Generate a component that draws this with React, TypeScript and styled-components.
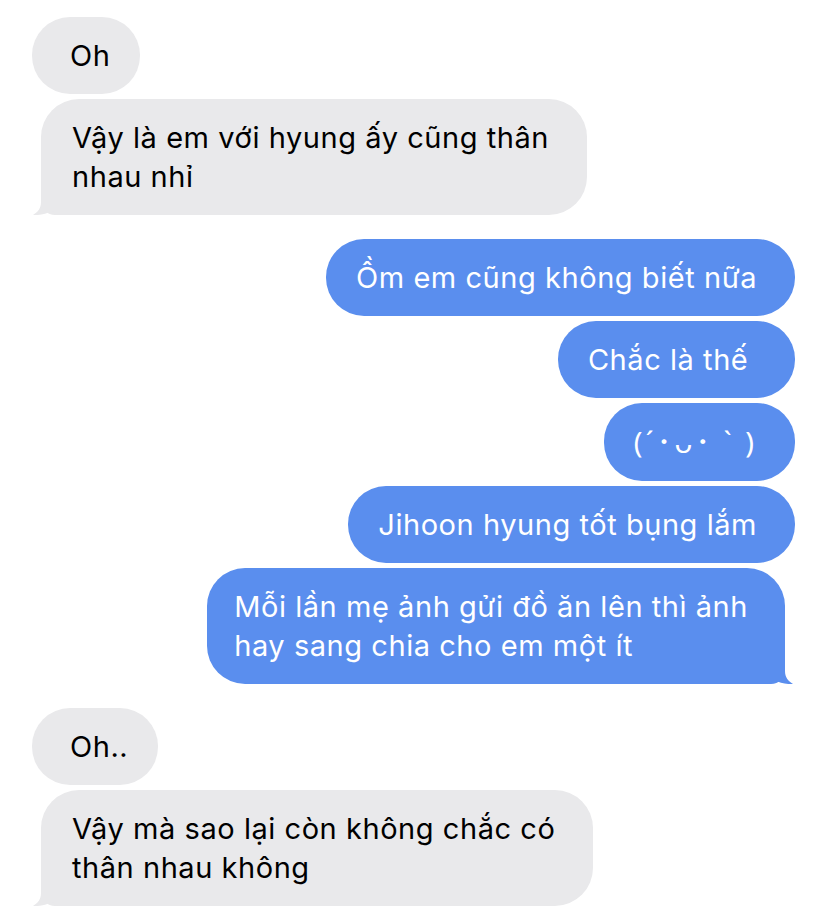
import { FC } from 'react';
import styled, { createGlobalStyle } from 'styled-components';

const GRAY = '#e9e9eb';
const BLUE = '#5a8eee';

const GlobalStyle = createGlobalStyle`
  html, body {
    margin: 0;
    padding: 0;
    background: #ffffff;
  }
  body {
    font-family: Inter, 'Noto Sans', 'Noto Sans CJK JP', sans-serif;
    -webkit-font-smoothing: antialiased;
  }
`;

const Thread = styled.div`
  width: 828px;
  height: 919px;
  box-sizing: border-box;
  padding-top: 17px;
  display: flex;
  flex-direction: column;
  gap: 5px;
  overflow: hidden;
`;

interface RowProps {
  $sent: boolean;
  $groupStart: boolean;
}

const Row = styled.div<RowProps>`
  display: flex;
  justify-content: ${(props) => (props.$sent ? 'flex-end' : 'flex-start')};
  padding: ${(props) => (props.$sent ? '0 33px 0 0' : '0 0 0 32px')};
  margin-top: ${(props) => (props.$groupStart ? 19 : 0)}px;
`;

interface BubbleProps {
  $sent: boolean;
  $tail: boolean;
}

const Bubble = styled.div<BubbleProps>`
  position: relative;
  box-sizing: border-box;
  padding: 19px
    ${(props) => (props.$sent ? (props.$tail ? 37 : 38) : props.$tail ? 38 : 30)}px
    19px ${(props) => (props.$sent ? (props.$tail ? 27 : 30) : props.$tail ? 31 : 38)}px;
  margin: ${(props) =>
    props.$tail ? (props.$sent ? '0 10px 0 0' : '0 0 0 9px') : '0'};
  border-radius: 38px;
  ${(props) =>
    props.$tail &&
    (props.$sent
      ? 'border-bottom-right-radius: 14px;'
      : 'border-bottom-left-radius: 14px;')}
  background: ${(props) => (props.$sent ? BLUE : GRAY)};
  color: ${(props) => (props.$sent ? '#ffffff' : '#000000')};
  font-size: 29px;
  line-height: 39px;
  letter-spacing: 0.55px;
  white-space: pre;
`;

interface TailProps {
  $sent: boolean;
}

const Tail = styled.svg<TailProps>`
  position: absolute;
  bottom: 0;
  width: 30px;
  height: 30px;
  ${(props) =>
    props.$sent ? 'right: -8px; transform: scaleX(-1);' : 'left: -8px;'}
`;

const Emote = styled.span`
  font-family: 'Noto Sans', 'DejaVu Sans', 'Noto Sans CJK JP', sans-serif;
  letter-spacing: 3px;
`;

interface Message {
  sent: boolean;
  lines: string[];
  tail?: boolean;
  groupStart?: boolean;
  emote?: boolean;
}

const MESSAGES: Message[] = [
  { sent: false, lines: ['Oh'] },
  {
    sent: false,
    tail: true,
    lines: ['Vậy là em với hyung ấy cũng thân', 'nhau nhỉ'],
  },
  { sent: true, groupStart: true, lines: ['Ồm em cũng không biết nữa'] },
  { sent: true, lines: ['Chắc là thế '] },
  { sent: true, emote: true, lines: ['(´･ᴗ･ ` )'] },
  { sent: true, lines: ['Jihoon hyung tốt bụng lắm'] },
  {
    sent: true,
    tail: true,
    lines: ['Mỗi lần mẹ ảnh gửi đồ ăn lên thì ảnh', 'hay sang chia cho em một ít'],
  },
  { sent: false, groupStart: true, lines: ['Oh..'] },
  {
    sent: false,
    tail: true,
    lines: ['Vậy mà sao lại còn không chắc có', 'thân nhau không'],
  },
];

const BubbleTail: FC<{ sent: boolean }> = ({ sent }) => (
  <Tail $sent={sent} viewBox="0 0 30 30">
    <path
      d="M8 0 L8 17 C8 23 5 27 0 30 C6 30.5 13 29 19 26 C22 28.5 26 30 30 30 L30 0 Z"
      fill={sent ? BLUE : GRAY}
    />
  </Tail>
);

const App: FC = () => {
  return (
    <>
      <GlobalStyle />
      <Thread>
        {MESSAGES.map((msg, i) => (
          <Row key={i} $sent={msg.sent} $groupStart={!!msg.groupStart}>
            <Bubble $sent={msg.sent} $tail={!!msg.tail}>
              {msg.lines.map((line, j) => (
                <div key={j}>{msg.emote ? <Emote>{line}</Emote> : line}</div>
              ))}
              {msg.tail && <BubbleTail sent={msg.sent} />}
            </Bubble>
          </Row>
        ))}
      </Thread>
    </>
  );
};

export default App;
